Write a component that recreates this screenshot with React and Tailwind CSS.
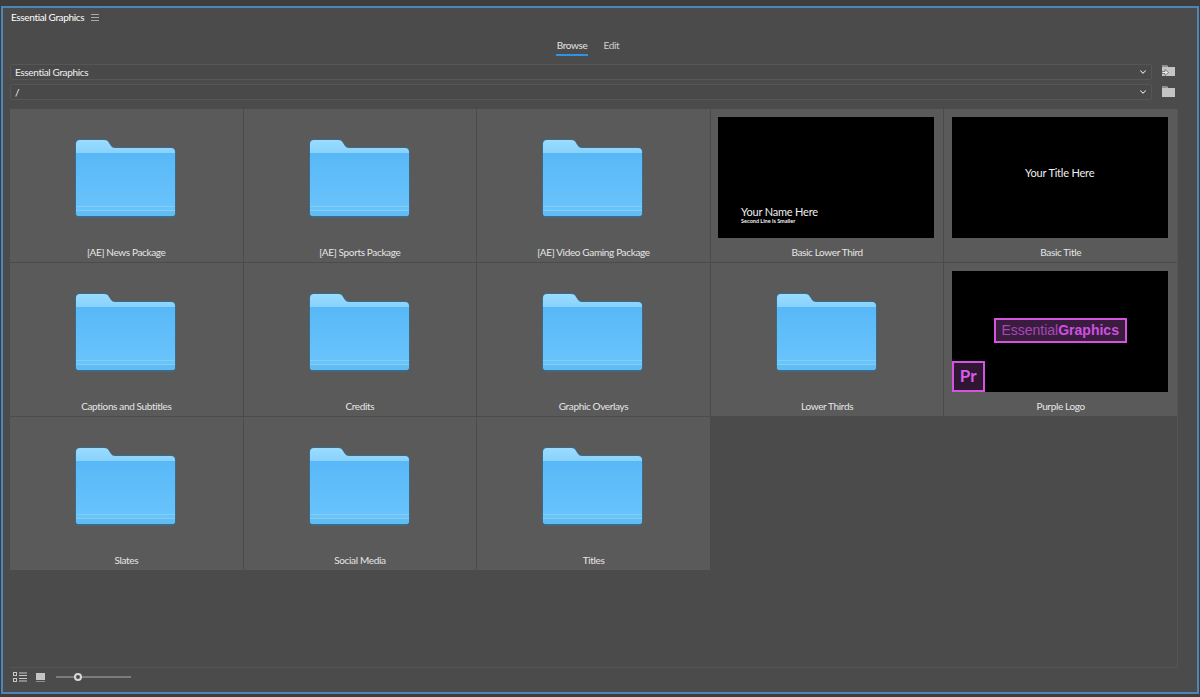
import React from 'react';
import { ChevronDown } from 'lucide-react';

function FolderIcon() {
  return (
    <svg width="102" height="80" viewBox="0 0 102 80" className="block">
      <defs>
        <linearGradient id="folderBody" x1="0" y1="0" x2="0" y2="1">
          <stop offset="0" stopColor="#58b8f7" />
          <stop offset="1" stopColor="#6cc5fc" />
        </linearGradient>
        <linearGradient id="folderTop" x1="0" y1="0" x2="0" y2="1">
          <stop offset="0" stopColor="#9adcff" />
          <stop offset="1" stopColor="#7ccbfb" />
        </linearGradient>
      </defs>
      {/* dark outline */}
      <path d="M0 6a5 5 0 0 1 5-5h24c3 0 4 1 5 3l2 3c1 1 2 2 4 2h56a5 5 0 0 1 5 5v61a5 5 0 0 1-5 5H5a5 5 0 0 1-5-5z" fill="#3f6a86" />
      {/* back with tab */}
      <path d="M1 6a4 4 0 0 1 4-4h24c3 0 4 1 5 3l2 3c1 1 2 2 4 2h56a4 4 0 0 1 4 4v10H1z" fill="url(#folderTop)" />
      {/* front */}
      <path d="M1 15h99v60a3 3 0 0 1-3 3H4a3 3 0 0 1-3-3z" fill="url(#folderBody)" />
      <rect x="1" y="68" width="99" height="1" fill="#86cdf4" />
      <rect x="1" y="72" width="99" height="1" fill="#86cdf4" />
      <path d="M1 73h99v2a3 3 0 0 1-3 3H4a3 3 0 0 1-3-3z" fill="#62bcf4" />
    </svg>
  );
}

function Cell({ label, children }) {
  return (
    <div className="flex h-[153px] flex-col items-center bg-[#5a5a5a]">
      <div className="flex h-[136px] w-full items-center justify-center">{children}</div>
      <span className="text-[10px] leading-[15px] text-[#e6e6e6]">{label}</span>
    </div>
  );
}

function Folder({ label }) {
  return (
    <Cell label={label}>
      <div className="pt-[2px]">
        <FolderIcon />
      </div>
    </Cell>
  );
}

function Thumb({ label, children }) {
  return (
    <Cell label={label}>
      <div className="relative mr-[2px] h-[121px] w-[216px] bg-black text-white tracking-[-0.2px]">{children}</div>
    </Cell>
  );
}

function PathSelect({ value }) {
  return (
    <div className="flex h-[16px] flex-1 items-center justify-between rounded-[2px] border border-[#565656] bg-[#494949] pl-[4px] pr-[3px]">
      <span className="text-[10px] leading-none text-[#f0f0f0]">{value}</span>
      <ChevronDown className="h-[10px] w-[10px] text-[#e4e4e4]" strokeWidth={2.5} />
    </div>
  );
}

function SmallFolder({ arrow }) {
  return (
    <svg width="13" height="11" viewBox="0 0 13 11" className="block">
      <path d="M0 0h5l1 2h7v9H0z" fill="#c4c4c4" />
      <rect x="0" y="0" width="5" height="2" fill="#8f8f8f" />
      {arrow && <path d="M0 6.5h3V4.5l3.5 3-3.5 3V8.5H0z" fill="#ececec" stroke="#4b4b4b" strokeWidth="0.6" />}
    </svg>
  );
}

export default function App() {
  return (
    <div className='flex h-[697px] w-[1200px] flex-col overflow-hidden bg-[#3f3d3c] pt-[6px] pb-[3px] font-["Lato","Noto_Sans",sans-serif] tracking-[-0.35px]'>
      <div className="mx-px flex flex-1 flex-col border-2 border-[#4a86b8] bg-[#4b4b4b]">
        {/* Panel header */}
        <div className="flex h-[18px] items-center gap-[7px] pl-[8px]">
          <span className="text-[10px] text-white">Essential Graphics</span>
          <svg width="8" height="7" viewBox="0 0 8 7">
            <path d="M0 .5h8M0 3.5h8M0 6.5h8" stroke="#a8a8a8" strokeWidth="1" />
          </svg>
        </div>

        {/* Tabs */}
        <div className="flex h-[35px] items-start justify-center gap-[15px] pt-[12px] pr-[25px]">
          <span className="border-b-2 border-[#2e93e6] px-px pb-px text-[10px] leading-[15px] text-[#e4e4e4]">Browse</span>
          <span className="text-[10px] leading-[15px] text-[#cfcfcf]">Edit</span>
        </div>

        {/* Path selectors */}
        <div className="mt-[3px] flex flex-col gap-[4px] pl-[7px] pr-[45px]">
          <div className="relative flex">
            <PathSelect value="Essential Graphics" />
            <span className="absolute right-[-23px] top-[1px]"><SmallFolder arrow /></span>
          </div>
          <div className="relative flex">
            <PathSelect value="/" />
            <span className="absolute right-[-23px] top-[2px]"><SmallFolder /></span>
          </div>
        </div>

        {/* Browser */}
        <div className="mt-[9px] ml-[7px] mr-[19px] flex-1 border-r border-b border-[#555555]">
          <div className="grid grid-cols-5 gap-px">
            <Folder label="[AE] News Package" />
            <Folder label="[AE] Sports Package" />
            <Folder label="[AE] Video Gaming Package" />
            <Thumb label="Basic Lower Third">
              <div className="absolute left-[23px] top-[88px]">
                <div className="text-[11px] leading-[13px] text-[#f0f0f0]">Your Name Here</div>
                <div className="text-[5.5px] font-bold leading-[7px] tracking-normal text-[#f0f0f0]">Second Line is Smaller</div>
              </div>
            </Thumb>
            <Thumb label="Basic Title">
              <div className="pt-[49px] text-center text-[11px] leading-[14px] text-[#f0f0f0]">Your Title Here</div>
            </Thumb>
            <Folder label="Captions and Subtitles" />
            <Folder label="Credits" />
            <Folder label="Graphic Overlays" />
            <Folder label="Lower Thirds" />
            <Thumb label="Purple Logo">
              <div className='absolute left-[42px] top-[47px] flex h-[25px] w-[133px] items-center justify-center border-2 border-[#d653e0] bg-[#3a1c3f] font-["Liberation_Sans",sans-serif] text-[14px] tracking-normal text-[#a548b4]'>
                Essential<b className="text-[#cf50e0]">Graphics</b>
              </div>
              <div className="absolute bottom-0 left-0 flex h-[31px] w-[33px] items-center justify-center border-2 border-[#d653e0] bg-[#2f1633] text-[17px] font-bold tracking-normal text-[#d85de8]">
                Pr
              </div>
            </Thumb>
            <Folder label="Slates" />
            <Folder label="Social Media" />
            <Folder label="Titles" />
          </div>
        </div>

        {/* Footer */}
        <div className="flex h-[24px] items-center gap-[8px] pb-[6px] pl-[10px]">
          <svg width="15" height="10" viewBox="0 0 15 10">
            <rect x=".5" y=".5" width="3" height="3" fill="none" stroke="#c8c8c8" />
            <rect x=".5" y="6.5" width="3" height="3" fill="none" stroke="#c8c8c8" />
            <path d="M6 1h8M6 3.5h8M6 6.5h8M6 9h8" stroke="#c8c8c8" />
          </svg>
          <svg width="10" height="9" viewBox="0 0 10 9">
            <rect width="9" height="7" fill="#c4c4c4" />
            <rect y="8" width="9" height="1" fill="#8c8c8c" />
          </svg>
          <div className="relative ml-[2px] h-[2px] w-[75px] bg-[#7c7c7c]">
            <span className="absolute left-[18px] top-[-3px] h-[8px] w-[8px] rounded-full border-2 border-[#d8d8d8] bg-[#4b4b4b]" />
          </div>
        </div>
      </div>
    </div>
  );
}
